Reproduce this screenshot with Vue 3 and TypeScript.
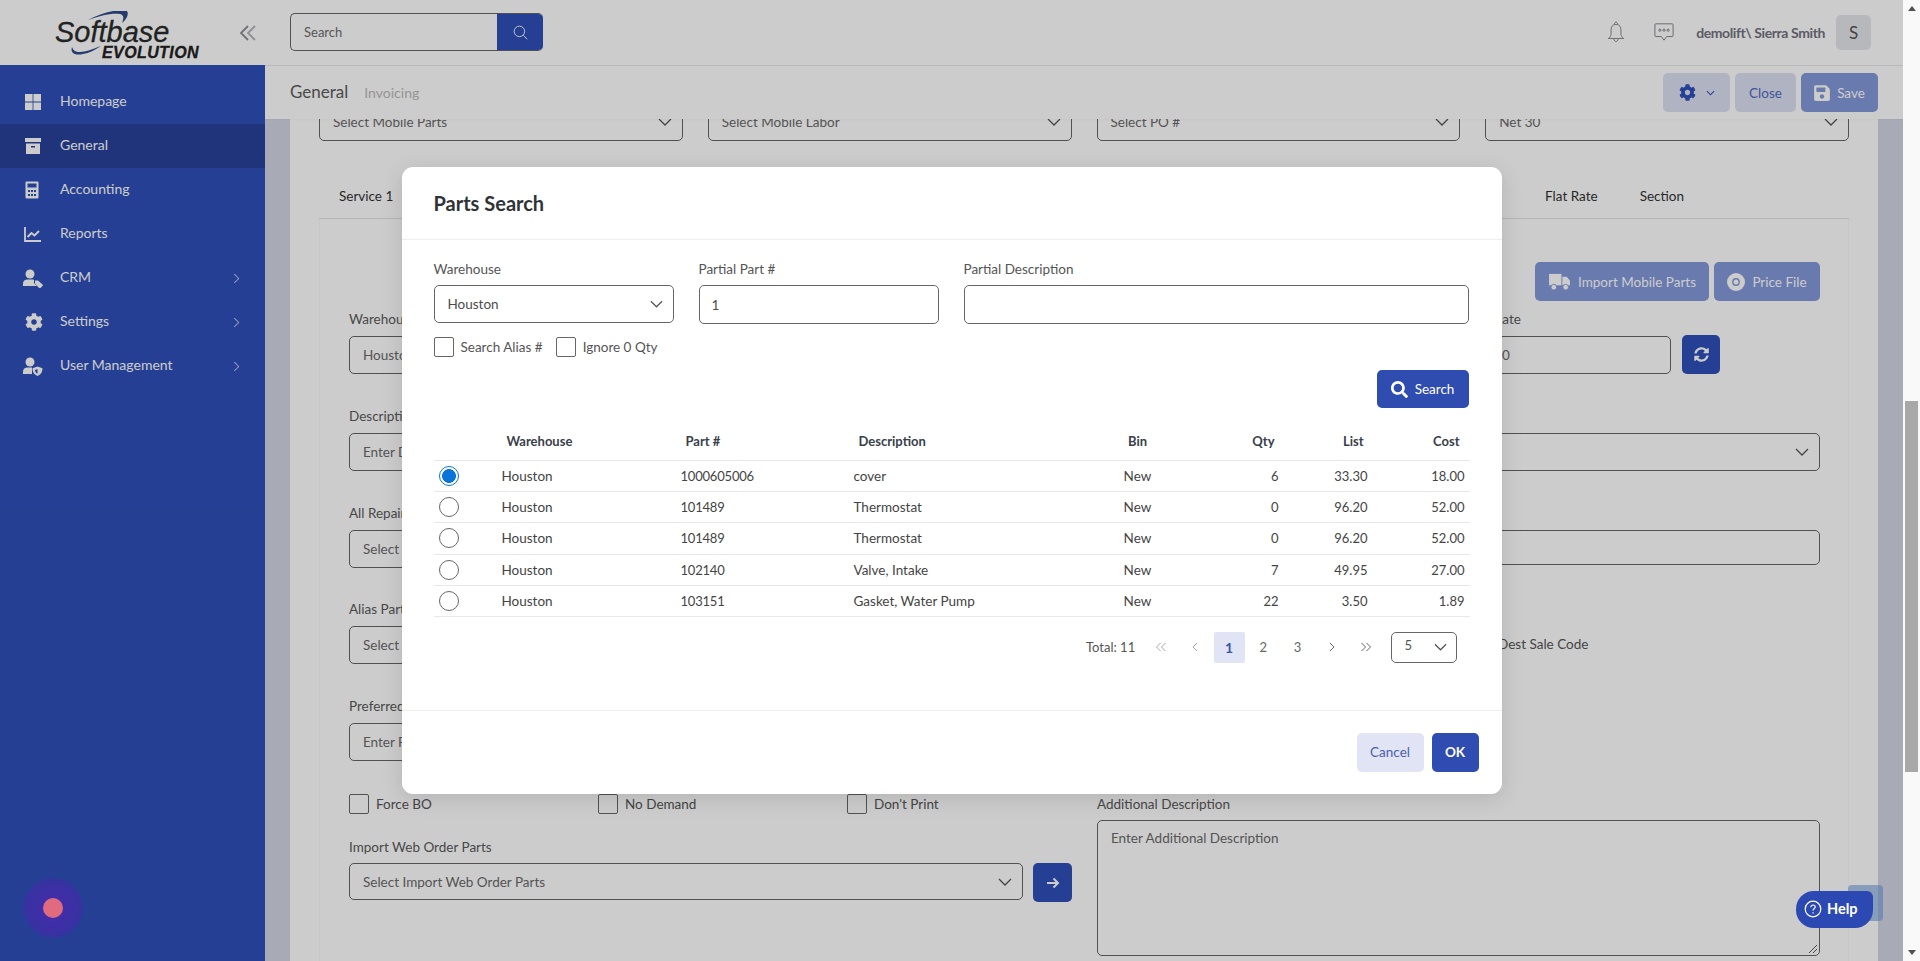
<script setup lang="ts">
interface NavItem {
  label: string
  icon: string
  active?: boolean
  more?: boolean
}

interface PartRow {
  warehouse: string
  part: string
  description: string
  bin: string
  qty: number
  list: string
  cost: string
}

const navItems: NavItem[] = [
  { label: 'Homepage', icon: 'home' },
  { label: 'General', icon: 'archive', active: true },
  { label: 'Accounting', icon: 'calc' },
  { label: 'Reports', icon: 'chart' },
  { label: 'CRM', icon: 'usertag', more: true },
  { label: 'Settings', icon: 'cog', more: true },
  { label: 'User Management', icon: 'usershield', more: true }
]

const topSelects = ['Select Mobile Parts', 'Select Mobile Labor', 'Select PO #', 'Net 30']

const parts: PartRow[] = [
  { warehouse: 'Houston', part: '1000605006', description: 'cover', bin: 'New', qty: 6, list: '33.30', cost: '18.00' },
  { warehouse: 'Houston', part: '101489', description: 'Thermostat', bin: 'New', qty: 0, list: '96.20', cost: '52.00' },
  { warehouse: 'Houston', part: '101489', description: 'Thermostat', bin: 'New', qty: 0, list: '96.20', cost: '52.00' },
  { warehouse: 'Houston', part: '102140', description: 'Valve, Intake', bin: 'New', qty: 7, list: '49.95', cost: '27.00' },
  { warehouse: 'Houston', part: '103151', description: 'Gasket, Water Pump', bin: 'New', qty: 22, list: '3.50', cost: '1.89' }
]

const cogPath =
  'M487.4 315.7l-42.6-24.6c4.3-23.2 4.3-47 0-70.2l42.6-24.6c4.9-2.8 7.1-8.6 5.5-14-11.1-35.6-30-67.8-54.7-94.6-3.8-4.1-10-5.1-14.8-2.3L380.8 110c-17.9-15.4-38.5-27.3-60.8-35.1V25.8c0-5.6-3.9-10.5-9.4-11.7-36.7-8.2-74.3-7.8-109.2 0-5.5 1.2-9.4 6.1-9.4 11.7V75c-22.2 7.9-42.8 19.8-60.8 35.1L88.7 85.5c-4.9-2.8-11-1.9-14.8 2.3-24.7 26.7-43.6 58.9-54.7 94.6-1.7 5.4.6 11.2 5.5 14L67.3 221c-4.3 23.2-4.3 47 0 70.2l-42.6 24.6c-4.9 2.8-7.1 8.6-5.5 14 11.1 35.6 30 67.8 54.7 94.6 3.8 4.1 10 5.1 14.8 2.3l42.6-24.6c17.9 15.4 38.5 27.3 60.8 35.1v49.2c0 5.6 3.9 10.5 9.4 11.7 36.7 8.2 74.3 7.8 109.2 0 5.5-1.2 9.4-6.1 9.4-11.7v-49.2c22.2-7.9 42.8-19.8 60.8-35.1l42.6 24.6c4.9 2.8 11 1.9 14.8-2.3 24.7-26.7 43.6-58.9 54.7-94.6 1.5-5.5-.7-11.3-5.6-14.1zM256 336c-44.1 0-80-35.9-80-80s35.9-80 80-80 80 35.9 80 80-35.9 80-80 80z'
const searchPath =
  'M505 442.7L405.3 343c-4.5-4.5-10.6-7-17-7H372c27.6-35.3 44-79.7 44-128C416 93.1 322.9 0 208 0S0 93.1 0 208s93.1 208 208 208c48.3 0 92.7-16.4 128-44v16.3c0 6.4 2.5 12.5 7 17l99.7 99.7c9.4 9.4 24.6 9.4 33.9 0l28.3-28.3c9.4-9.4 9.4-24.6.1-34zM208 336c-70.7 0-128-57.2-128-128 0-70.7 57.2-128 128-128 70.7 0 128 57.2 128 128 0 70.7-57.2 128-128 128z'
const savePath =
  'M433.941 129.941l-83.882-83.882A48 48 0 0 0 316.118 32H48C21.49 32 0 53.49 0 80v352c0 26.51 21.49 48 48 48h352c26.51 0 48-21.49 48-48V163.882a48 48 0 0 0-14.059-33.941zM224 416c-35.346 0-64-28.654-64-64 0-35.346 28.654-64 64-64s64 28.654 64 64c0 35.346-28.654 64-64 64zm96-304.52V212c0 6.627-5.373 12-12 12H76c-6.627 0-12-5.373-12-12V108c0-6.627 5.373-12 12-12h228.52c3.183 0 6.235 1.264 8.485 3.515l3.48 3.48A11.996 11.996 0 0 1 320 111.48z'
</script>

<template>
  <div class="page">
    <div class="app">
      <aside class="sidebar">
        <div class="brand">
          <div class="logo">
            <svg class="swoosh" viewBox="0 0 145 50" width="145" height="50">
              <path d="M33 9 C48 1 62 -2 72 0 C74 3 72 8 67 12 C69 7 69 4 65 3 C55 2 45 5 33 9Z" fill="#2f4a8a" />
              <path d="M17 36 C15 42 20 45 28 43 C34 42 40 39 46 35 C38 38 30 41 25 41 C20 41 18 39 17 36Z" fill="#2f4a8a" />
            </svg>
            <span class="logo-main">Softbase</span>
            <span class="logo-sub">EVOLUTION</span>
          </div>
          <svg class="collapse" viewBox="0 0 18 16" width="18" height="16" fill="none" stroke-width="1.8">
            <path d="M9 1 L2 8 L9 15" stroke="#8e8e96" />
            <path d="M16 1 L9 8 L16 15" stroke="#b4b4ba" />
          </svg>
        </div>
        <nav class="nav">
          <a v-for="item in navItems" :key="item.label" class="nav-item" :class="{ active: item.active }">
            <span class="nav-icon">
              <svg v-if="item.icon === 'home'" viewBox="0 0 20 20" width="20" height="20" fill="currentColor">
                <rect x="2" y="2" width="7.6" height="7.5" />
                <rect x="10.4" y="2" width="7.6" height="7.5" />
                <rect x="2" y="10.5" width="7.6" height="7.5" />
                <rect x="10.4" y="10.5" width="7.6" height="7.5" />
              </svg>
              <svg v-else-if="item.icon === 'archive'" viewBox="0 0 20 20" width="20" height="20" fill="currentColor">
                <rect x="2" y="2" width="16" height="4" />
                <path d="M3 7.5h14V18H3z M8 10v1.5h4V10z" fill-rule="evenodd" />
              </svg>
              <svg v-else-if="item.icon === 'calc'" viewBox="0 0 20 20" width="20" height="20" fill="currentColor">
                <path fill-rule="evenodd" d="M3.5 1.5h11a1 1 0 0 1 1 1v15a1 1 0 0 1-1 1h-11a1 1 0 0 1-1-1v-15a1 1 0 0 1 1-1z M4.5 3.5v4h9v-4z M5 10v2h2v-2z M8 10v2h2v-2z M11 10v2h2v-2z M5 14v2h2v-2z M8 14v2h2v-2z M11 14v2h2v-2z" />
              </svg>
              <svg v-else-if="item.icon === 'chart'" viewBox="0 0 20 20" width="20" height="20" fill="none" stroke="currentColor">
                <path d="M2 3v14h16" stroke-width="1.8" />
                <path d="M4.5 13l4-4 3 2.5L16 7" stroke-width="2" />
              </svg>
              <svg v-else-if="item.icon === 'usertag'" viewBox="0 0 21 20" width="21" height="20" fill="currentColor">
                <circle cx="7" cy="6" r="4.5" />
                <path d="M0 18v-2.5C0 13 2 11.5 4.5 11.5h5c1 0 1.5.3 1.5 1V15l3 3z" />
                <path d="M12 12.5h3l4.5 4a1 1 0 0 1 0 1.4l-2 2a1 1 0 0 1-1.4 0L12 15.5z" />
              </svg>
              <svg v-else-if="item.icon === 'cog'" class="cog-icon" viewBox="0 0 512 512" width="18" height="18" fill="currentColor">
                <path :d="cogPath" />
              </svg>
              <svg v-else viewBox="0 0 21 20" width="21" height="20" fill="currentColor">
                <circle cx="7" cy="6" r="4.5" />
                <path d="M0 18v-2.5C0 13 2 11.5 4.5 11.5h4.5V18z" />
                <path fill-rule="evenodd" d="M14.5 10.5l5 1.8c0 4-1.7 6.5-5 7.7-3.3-1.2-5-3.7-5-7.7z M14.5 13l-2.5 1c.2 1.9.9 3 2.5 3.7z" />
              </svg>
            </span>
            <span class="nav-label">{{ item.label }}</span>
            <svg v-if="item.more" class="nav-more" viewBox="0 0 8 12" width="7" height="11" fill="none" stroke="currentColor" stroke-width="1.2">
              <path d="M1.5 1 L6.5 6 L1.5 11" />
            </svg>
          </a>
        </nav>
      </aside>

      <div class="main">
        <header class="topbar">
          <div class="search">
            <span class="search-text">Search</span>
            <span class="search-btn">
              <svg viewBox="0 0 16 16" width="15" height="15" fill="none" stroke="#fff" stroke-width="1">
                <circle cx="6.8" cy="6.8" r="5.6" />
                <path d="M11 11l4.2 4.2" />
              </svg>
            </span>
          </div>
          <div class="user">
            <svg class="bell" viewBox="0 0 20 24" width="18" height="22" fill="none" stroke="#7c7c82" stroke-width="1">
              <path d="M10 3.5c-3.6 0-5.5 2.6-5.5 6v5c0 2-1.6 3.6-3 4.7h17c-1.4-1.1-3-2.7-3-4.7v-5c0-3.4-1.9-6-5.5-6z" />
              <path d="M8.3 3.5C8.3 2 9 1 10 1s1.7 1 1.7 2.5" />
              <path d="M7.5 19.5c.3 1.7 1.2 3 2.5 3s2.2-1.3 2.5-3" />
            </svg>
            <svg class="chat" viewBox="0 0 22 22" width="20" height="20" fill="none" stroke="#7c7c82" stroke-width="1">
              <path d="M2 2h18a1 1 0 0 1 1 1v12a1 1 0 0 1-1 1h-6l-3 4-3-4H2a1 1 0 0 1-1-1V3a1 1 0 0 1 1-1z" />
              <circle cx="6.5" cy="9" r="1.2" />
              <circle cx="11" cy="9" r="1.2" />
              <circle cx="15.5" cy="9" r="1.2" />
            </svg>
            <span class="user-name">demolift\ Sierra Smith</span>
            <span class="avatar">S</span>
          </div>
        </header>

        <div class="subbar">
          <div class="crumbs">
            <span class="crumb-main">General</span>
            <span class="crumb-sub">Invoicing</span>
          </div>
          <div class="subbar-actions">
            <button class="btn btn-soft btn-gear">
              <svg viewBox="0 0 512 512" width="17" height="17" fill="#2e4fb8"><path :d="cogPath" /></svg>
              <svg viewBox="0 0 10 6" width="9" height="6" fill="none" stroke="#2e4fb8" stroke-width="1.2"><path d="M1 1l4 4 4-4" /></svg>
            </button>
            <button class="btn btn-soft btn-close">Close</button>
            <button class="btn btn-faded btn-save">
              <svg viewBox="0 0 448 512" width="16" height="18" fill="#fff"><path :d="savePath" /></svg>
              Save
            </button>
          </div>
        </div>

        <div class="content">
          <section class="card">
            <div class="top-selects">
              <div v-for="label in topSelects" :key="label" class="box select">
                <span>{{ label }}</span>
                <svg viewBox="0 0 14 8" width="14" height="8" fill="none" stroke="#555" stroke-width="1.3"><path d="M1 1l6 6 6-6" /></svg>
              </div>
            </div>

            <div class="tabs">
              <span class="tab">Service 1</span>
              <span class="tab tab-far">Flat Rate</span>
              <span class="tab">Section</span>
            </div>

            <div class="panel">
              <div class="panel-actions">
                <button class="btn btn-faded">
                  <svg viewBox="0 0 24 20" width="23" height="19" fill="#fff">
                    <path d="M1 2h13v12H1z" />
                    <path d="M15 5h4.5l3.5 4v5h-8z" />
                    <circle cx="6" cy="16" r="3" stroke="#8499db" />
                    <circle cx="18.5" cy="16" r="3" stroke="#8499db" />
                  </svg>
                  Import Mobile Parts
                </button>
                <button class="btn btn-faded">
                  <svg viewBox="0 0 18 18" width="18" height="18">
                    <circle cx="9" cy="9" r="9" fill="#fff" />
                    <circle cx="9" cy="9" r="3.2" fill="none" stroke="#8499db" stroke-width="1.4" />
                  </svg>
                  Price File
                </button>
              </div>

              <div class="form-grid">
                <div class="field">
                  <label>Warehouse</label>
                  <div class="box"><span>Houston</span></div>
                </div>
                <div class="field-rate">
                  <div class="field">
                    <label>Labor Rate</label>
                    <div class="box"><span>100.00</span></div>
                  </div>
                  <button class="btn btn-solid btn-square">
                    <svg viewBox="0 0 512 512" width="15" height="15" fill="#fff">
                      <path d="M370.7 133.3C339.5 104 298.9 88 255.8 88c-77.5.1-144.3 53.2-162.8 126.9-1.3 5.4-6.1 9.2-11.7 9.2H24.1c-7.5 0-13.2-6.8-11.8-14.2C33.9 94.9 134.8 8 256 8c66.4 0 126.8 26.1 171.3 68.7L463 41c15.1-15.1 41-4.4 41 17v134c0 13.3-10.7 24-24 24H346c-21.4 0-32.1-25.9-17-41l41.7-41.7zM32 296h134c21.4 0 32.1 25.9 17 41l-41.7 41.7c31.2 29.3 71.8 45.3 114.9 45.3 77.4-.1 144.3-53.1 162.8-126.8 1.3-5.4 6.1-9.2 11.7-9.2h57.3c7.5 0 13.2 6.8 11.8 14.2C478.1 417.1 377.2 504 256 504c-66.4 0-126.8-26.1-171.3-68.7L49 471c-15.1 15.1-41 4.4-41-17V320c0-13.3 10.7-24 24-24z" />
                    </svg>
                  </button>
                </div>

                <div class="field">
                  <label>Description</label>
                  <div class="box"><span>Enter Description</span></div>
                </div>
                <div class="field">
                  <label>Category</label>
                  <div class="box select">
                    <span>Select Category</span>
                    <svg viewBox="0 0 14 8" width="14" height="8" fill="none" stroke="#555" stroke-width="1.3"><path d="M1 1l6 6 6-6" /></svg>
                  </div>
                </div>

                <div class="field">
                  <label>All Repair Parts</label>
                  <div class="box"><span>Select Repair Parts</span></div>
                </div>
                <div class="field">
                  <label>Comments</label>
                  <div class="box short"><span>Enter Comments</span></div>
                </div>

                <div class="field">
                  <label>Alias Parts</label>
                  <div class="box"><span>Select Alias Parts</span></div>
                </div>
                <div class="dest-check">
                  <span class="check"></span>
                  <span>Dest Sale Code</span>
                </div>

                <div class="field">
                  <label>Preferred Vendor</label>
                  <div class="box"><span>Enter Preferred Vendor</span></div>
                </div>
              </div>

              <div class="form-bottom">
                <div>
                  <div class="checks">
                    <div class="check-item"><span class="check"></span><span>Force BO</span></div>
                    <div class="check-item"><span class="check"></span><span>No Demand</span></div>
                    <div class="check-item"><span class="check"></span><span>Don't Print</span></div>
                  </div>
                  <div class="field web-order">
                    <label>Import Web Order Parts</label>
                    <div class="web-row">
                      <div class="box select web-select">
                        <span>Select Import Web Order Parts</span>
                        <svg viewBox="0 0 14 8" width="14" height="8" fill="none" stroke="#555" stroke-width="1.3"><path d="M1 1l6 6 6-6" /></svg>
                      </div>
                      <button class="btn btn-solid btn-square">
                        <svg viewBox="0 0 14 14" width="14" height="14" fill="none" stroke="#fff" stroke-width="2"><path d="M1 7h11M7.5 2.5L12 7l-4.5 4.5" /></svg>
                      </button>
                    </div>
                  </div>
                </div>
                <div class="field field-area">
                  <label>Additional Description</label>
                  <div class="box area">
                    <span>Enter Additional Description</span>
                    <svg class="grip" viewBox="0 0 10 10" width="10" height="10" stroke="#555" stroke-width="1"><path d="M1 9l8-8M5 9l4-4" /></svg>
                  </div>
                </div>
              </div>
            </div>
          </section>
        </div>
      </div>

      <span class="to-top"></span>

      <div class="backdrop">
        <div class="modal">
          <div class="modal-head">Parts Search</div>
          <div class="modal-body">
            <div class="search-fields">
              <div class="mfield">
                <label>Warehouse</label>
                <div class="mbox">
                  <span>Houston</span>
                  <svg viewBox="0 0 14 8" width="13" height="8" fill="none" stroke="#555" stroke-width="1.3"><path d="M1 1l6 6 6-6" /></svg>
                </div>
              </div>
              <div class="mfield">
                <label>Partial Part #</label>
                <div class="mbox input"><span>1</span></div>
              </div>
              <div class="mfield">
                <label>Partial Description</label>
                <div class="mbox input"></div>
              </div>
            </div>
            <div class="search-checks">
              <div class="check-item"><span class="check"></span><span>Search Alias #</span></div>
              <div class="check-item"><span class="check"></span><span>Ignore 0 Qty</span></div>
            </div>
            <div class="search-action">
              <button class="btn btn-primary">
                <svg viewBox="0 0 512 512" width="17" height="17" fill="#fff"><path :d="searchPath" /></svg>
                Search
              </button>
            </div>

            <table class="parts">
              <colgroup>
                <col style="width: 63px" />
                <col style="width: 179px" />
                <col style="width: 173px" />
                <col style="width: 242px" />
                <col style="width: 94px" />
                <col style="width: 99px" />
                <col style="width: 89px" />
                <col style="width: 97px" />
              </colgroup>
              <thead>
                <tr>
                  <th></th>
                  <th>Warehouse</th>
                  <th>Part #</th>
                  <th>Description</th>
                  <th class="center">Bin</th>
                  <th class="right">Qty</th>
                  <th class="right">List</th>
                  <th class="right last">Cost</th>
                </tr>
              </thead>
              <tbody>
                <tr v-for="(row, i) in parts" :key="i">
                  <td class="radio-cell"><span class="radio" :class="{ on: i === 0 }"></span></td>
                  <td>{{ row.warehouse }}</td>
                  <td class="part-no">{{ row.part }}</td>
                  <td>{{ row.description }}</td>
                  <td class="center">{{ row.bin }}</td>
                  <td class="right">{{ row.qty }}</td>
                  <td class="right">{{ row.list }}</td>
                  <td class="right">{{ row.cost }}</td>
                </tr>
              </tbody>
            </table>

            <div class="pager">
              <span class="total">Total: 11</span>
              <span class="page-item muted">
                <svg viewBox="0 0 12 10" width="12" height="10" fill="none" stroke="currentColor"><path d="M5.5 1l-4 4 4 4M10.5 1l-4 4 4 4" /></svg>
              </span>
              <span class="page-item muted">
                <svg viewBox="0 0 6 10" width="6" height="10" fill="none" stroke="currentColor"><path d="M5 1L1 5l4 4" /></svg>
              </span>
              <span class="page-item current">1</span>
              <span class="page-item">2</span>
              <span class="page-item">3</span>
              <span class="page-item">
                <svg viewBox="0 0 6 10" width="6" height="10" fill="none" stroke="currentColor"><path d="M1 1l4 4-4 4" /></svg>
              </span>
              <span class="page-item">
                <svg viewBox="0 0 12 10" width="12" height="10" fill="none" stroke="currentColor"><path d="M1.5 1l4 4-4 4M6.5 1l4 4-4 4" /></svg>
              </span>
              <div class="page-size">
                <span>5</span>
                <svg viewBox="0 0 14 8" width="13" height="8" fill="none" stroke="#555" stroke-width="1.3"><path d="M1 1l6 6 6-6" /></svg>
              </div>
            </div>
          </div>
          <div class="modal-foot">
            <button class="btn btn-cancel">Cancel</button>
            <button class="btn btn-primary btn-ok">OK</button>
          </div>
        </div>
      </div>

      <span class="chat-dot"><i></i></span>
      <button class="help">
        <svg viewBox="0 0 18 18" width="18" height="18" fill="none" stroke="#fff" stroke-width="1.2">
          <circle cx="9" cy="9" r="7.8" />
          <path d="M6.8 7.2c0-1.4 1-2.2 2.2-2.2s2.2.8 2.2 2c0 1.7-2.2 1.7-2.2 3.4" />
          <path d="M9 12.2v1.2" />
        </svg>
        Help
      </button>
    </div>

    <div class="scrollbar">
      <span class="arrow up"></span>
      <span class="thumb"></span>
      <span class="arrow down"></span>
    </div>
  </div>
</template>

<style>
html,
body {
  margin: 0;
  overflow: hidden;
}
</style>

<style scoped>
.page {
  display: flex;
  width: 1920px;
  height: 961px;
  overflow: hidden;
  font-family: Lato, "Noto Sans", sans-serif;
  font-size: 13.5px;
  color: #555;
}

.app {
  position: relative;
  flex: 1;
  display: flex;
  min-width: 0;
  overflow: hidden;
  background: #d3d6e4;
}

.sidebar {
  width: 265px;
  flex: none;
  background: #2e4fb8;
  display: flex;
  flex-direction: column;
}

.brand {
  height: 65px;
  flex: none;
  background: #fff;
  display: flex;
  align-items: flex-start;
  padding-left: 55px;
  box-sizing: border-box;
  position: relative;
}

.logo {
  position: relative;
  width: 146px;
  padding-top: 17px;
  display: flex;
  flex-direction: column;
}

.swoosh {
  position: absolute;
  left: 0;
  top: 11px;
}

.logo-main {
  font-family: "Liberation Sans", sans-serif;
  font-style: italic;
  font-size: 29px;
  line-height: 30px;
  color: #2b2b2b;
  -webkit-text-stroke: 0.3px #2b2b2b;
}

.logo-sub {
  font-family: "Liberation Sans", sans-serif;
  font-style: italic;
  font-weight: 700;
  font-size: 16px;
  line-height: 13px;
  letter-spacing: 0.4px;
  color: #222;
  -webkit-text-stroke: 0.3px #222;
  margin-left: 47px;
  margin-top: -1px;
}

.collapse {
  position: absolute;
  left: 239px;
  top: 25px;
}

.nav {
  padding-top: 15px;
  display: flex;
  flex-direction: column;
}

.nav-item {
  height: 44px;
  display: flex;
  align-items: center;
  padding: 0 25px 0 23px;
  color: #fff;
  font-size: 14px;
}

.nav-item.active {
  background: #28429b;
}

.nav-icon {
  width: 37px;
  flex: none;
  display: flex;
  align-items: center;
}

.cog-icon {
  margin-left: 2px;
}

.nav-label {
  flex: 1;
  padding-bottom: 3px;
}

.nav-more {
  color: #b9c4e8;
}

.main {
  flex: 1;
  min-width: 0;
  display: flex;
  flex-direction: column;
}

.topbar {
  height: 66px;
  flex: none;
  box-sizing: border-box;
  background: #fff;
  border-bottom: 1px solid #e9e9e9;
  display: flex;
  align-items: center;
  justify-content: space-between;
  padding: 0 32px 1px 25px;
}

.search {
  width: 253px;
  height: 38px;
  display: flex;
  box-sizing: border-box;
  border: 1px solid #666;
  border-right: none;
  border-radius: 5px;
  overflow: hidden;
}

.search-text {
  flex: 1;
  padding-left: 13px;
  line-height: 36px;
  font-size: 13px;
  color: #6c6c6c;
}

.search-btn {
  width: 46px;
  margin: -1px 0;
  background: #2e4fb8;
  display: flex;
  align-items: center;
  justify-content: center;
}

.user {
  display: flex;
  align-items: center;
}

.chat {
  margin-left: 29px;
}

.user-name {
  margin-left: 22px;
  font-weight: 700;
  font-size: 14px;
  color: #737380;
  letter-spacing: -0.4px;
}

.avatar {
  margin-left: 11px;
  width: 35px;
  height: 35px;
  border-radius: 5px;
  background: #e4e7ec;
  display: flex;
  align-items: center;
  justify-content: center;
  font-size: 17px;
  color: #555;
}

.subbar {
  height: 53px;
  flex: none;
  background: #fff;
  display: flex;
  align-items: center;
  justify-content: space-between;
  padding-left: 25px;
  position: relative;
  z-index: 2;
  box-shadow: 0 1px 2px rgba(0, 0, 0, 0.03);
}

.crumbs {
  display: flex;
  align-items: baseline;
  gap: 16px;
  padding-bottom: 2px;
}

.crumb-main {
  font-size: 17px;
  color: #5c5c5c;
}

.crumb-sub {
  font-size: 14px;
  color: #bbb;
}

.subbar-actions {
  display: flex;
  margin-right: 25px;
  gap: 5px;
}

.btn {
  border: none;
  height: 39px;
  border-radius: 5px;
  display: inline-flex;
  align-items: center;
  justify-content: center;
  gap: 7px;
  font-family: inherit;
  font-size: 13.5px;
  cursor: pointer;
  padding: 0;
}

.btn-soft {
  background: #dde2f3;
  color: #4e69c0;
}

.btn-gear {
  width: 67px;
  gap: 10px;
}

.btn-close {
  width: 61px;
}

.btn-save {
  width: 77px;
  gap: 7px;
}

.btn-faded {
  background: #8499db;
  color: #fff;
}

.btn-solid {
  background: #2e4fb8;
  color: #fff;
}

.btn-square {
  width: 38px;
}

.content {
  flex: 1;
  min-height: 0;
  overflow: hidden;
  padding: 0 25px;
}

.card {
  background: #fff;
  padding: 0 29px 40px;
  margin-top: -16px;
}

.box {
  height: 38px;
  box-sizing: border-box;
  border: 1px solid #666;
  border-radius: 5px;
  display: flex;
  align-items: center;
  padding: 0 13px;
  color: #6a6a6a;
  font-size: 13.5px;
  background: #fff;
}

.box.select {
  justify-content: space-between;
  padding-right: 10px;
}

.box.short {
  height: 35px;
}

.top-selects {
  display: grid;
  grid-template-columns: repeat(4, 1fr);
  column-gap: 25px;
}

.tabs {
  display: flex;
  height: 78px;
  box-sizing: border-box;
  padding: 45px 165px 0 20px;
  border-bottom: 1px solid #e3e3e3;
}

.tab {
  color: #333;
  font-size: 13.5px;
  line-height: 20px;
  margin-right: 42px;
}

.tab:last-child {
  margin-right: 0;
}

.tab-far {
  margin-left: auto;
}

.panel {
  padding: 43px 28px 40px 29px;
  border: 1px solid #fbfbfb;
  border-top: none;
}

.panel-actions {
  display: flex;
  justify-content: flex-end;
  gap: 5px;
}

.panel-actions .btn:first-child {
  width: 174px;
}

.panel-actions .btn:last-child {
  width: 106px;
}

.form-grid {
  margin-top: 8px;
  display: grid;
  grid-template-columns: 723px 723px;
  column-gap: 25px;
  row-gap: 31.75px;
  align-items: start;
}

.field label {
  display: block;
  height: 20px;
  line-height: 20px;
  margin-bottom: 7px;
  color: #5a5a5a;
}

.field-rate {
  display: flex;
  justify-content: flex-end;
  align-items: flex-end;
  gap: 11px;
  padding-right: 100px;
}

.field-rate .field {
  width: 217px;
}

.field-rate label {
  padding-left: 3px;
}

.field-rate .box {
  padding-left: 12.5px;
}

.dest-check {
  display: flex;
  align-items: center;
  gap: 6px;
  justify-content: flex-start;
  padding: 35px 0 0 375px;
}

.check {
  width: 20px;
  height: 20px;
  box-sizing: border-box;
  border: 1px solid #666;
  border-radius: 2px;
  flex: none;
  background: #fff;
}

.form-bottom {
  margin-top: 33px;
  display: grid;
  grid-template-columns: 723px 723px;
  column-gap: 25px;
  align-items: start;
}

.checks {
  display: grid;
  grid-template-columns: repeat(3, 249px);
}

.check-item {
  display: flex;
  align-items: center;
  gap: 7px;
}

.web-order {
  margin-top: 23px;
}

.web-order label {
  margin-bottom: 6px;
}

.web-row {
  display: flex;
  gap: 10px;
}

.web-select {
  width: 674px;
  height: 37px;
}

.web-select + .btn-square {
  width: 39px;
}

.field-area label {
  margin-bottom: 6px;
}

.box.area {
  height: 136px;
  position: relative;
  align-items: flex-start;
  padding-top: 9px;
}

.grip {
  position: absolute;
  right: 1px;
  bottom: 1px;
}

.to-top {
  position: absolute;
  left: 1848px;
  top: 885px;
  width: 35px;
  height: 36px;
  border-radius: 4px;
  background: rgba(100, 150, 215, 0.55);
}

.backdrop {
  position: absolute;
  inset: 0;
  background: rgba(0, 0, 0, 0.2);
  z-index: 5;
  padding-top: 167px;
  display: flex;
  justify-content: center;
  align-items: flex-start;
}

.modal {
  width: 1100px;
  background: #fff;
  border-radius: 11px;
  box-shadow: 0 4px 22px rgba(0, 0, 0, 0.12);
  color: #444;
}

.modal-head {
  height: 73px;
  box-sizing: border-box;
  padding: 0 32px;
  display: flex;
  align-items: center;
  border-bottom: 1px solid #eee;
  font-size: 20px;
  font-weight: 700;
  color: #2f3338;
}

.modal-body {
  padding: 19px 33px 47px 32px;
}

.search-fields {
  display: grid;
  grid-template-columns: 240px 240px 505px;
  column-gap: 25px;
}

.mfield label {
  display: block;
  height: 20px;
  line-height: 20px;
  margin-bottom: 6px;
  color: #555;
}

.mbox {
  height: 38px;
  box-sizing: border-box;
  border: 1px solid #666;
  border-radius: 5px;
  display: flex;
  align-items: center;
  justify-content: space-between;
  padding: 0 10px 0 13px;
  font-size: 13.5px;
  color: #4c4c4c;
}

.mbox.input {
  height: 39px;
  padding-left: 12px;
}

.search-checks {
  display: flex;
  gap: 13px;
  margin-top: 13px;
  font-size: 13.5px;
  color: #555;
}

.search-action {
  display: flex;
  justify-content: flex-end;
  margin-top: 13px;
}

.btn-primary {
  background: #2f4cb0;
  color: #fff;
  width: 92px;
  height: 38px;
}

.parts {
  width: 1036px;
  margin-top: 14px;
  border-collapse: collapse;
  table-layout: fixed;
  font-size: 13.5px;
}

.parts th {
  height: 38px;
  padding: 0 0 0 10px;
  text-align: left;
  font-size: 13px;
  font-weight: 700;
  color: #39404a;
  border-bottom: 1px solid #e8e8e8;
}

.parts td {
  height: 30.2px;
  padding: 0 0 0 5px;
  color: #444;
  border-bottom: 1px solid #e8e8e8;
}

.parts td.part-no {
  font-size: 13px;
  letter-spacing: -0.2px;
}

.parts th.center,
.parts td.center {
  text-align: center;
  padding: 0;
}

.parts th.right {
  text-align: right;
  padding: 0 9px 0 0;
}

.parts th.right.last {
  padding-right: 10px;
}

.parts td.right {
  text-align: right;
  padding: 0 5px 0 0;
  font-size: 13px;
}

.parts td.radio-cell {
  padding: 0 0 0 5px;
}

.radio {
  display: block;
  width: 20px;
  height: 20px;
  box-sizing: border-box;
  border: 1px solid #666;
  border-radius: 50%;
}

.radio.on {
  border: 1.5px solid #0a74da;
  background: radial-gradient(circle, #0a74da 0, #0a74da 6.6px, #fff 7.2px);
}

.pager {
  margin-top: 15px;
  display: flex;
  align-items: center;
  justify-content: flex-end;
  padding-right: 12px;
  font-size: 13px;
  color: #555;
}

.total {
  margin-right: 10px;
}

.page-item {
  width: 31px;
  height: 31px;
  margin-right: 3.2px;
  display: flex;
  align-items: center;
  justify-content: center;
  color: #666;
}

.page-item.muted {
  color: #a8a8a8;
}

.page-item.current {
  background: #e0e4f4;
  border-radius: 2px;
  color: #3a55ad;
  font-weight: 700;
  font-size: 14px;
}

.page-size {
  width: 66px;
  height: 31px;
  margin-left: 6px;
  box-sizing: border-box;
  border: 1px solid #666;
  border-radius: 5px;
  display: flex;
  align-items: center;
  justify-content: space-between;
  padding: 0 9px 5px 13px;
}

.page-size svg {
  margin-top: 5px;
}

.modal-foot {
  height: 84px;
  box-sizing: border-box;
  border-top: 1px solid #eee;
  padding: 22px 23px 0 0;
  display: flex;
  justify-content: flex-end;
  gap: 8px;
}

.btn-cancel {
  width: 67px;
  background: #e0e4f4;
  color: #4d60a8;
}

.btn-ok {
  width: 47px;
  height: 39px;
  font-weight: 700;
}

.chat-dot {
  position: absolute;
  left: 23px;
  top: 878px;
  width: 60px;
  height: 60px;
  border-radius: 50%;
  background: radial-gradient(circle, #442cab 0, #3b30a4 55%, rgba(48, 60, 155, 0) 100%);
  z-index: 6;
  display: flex;
  align-items: center;
  justify-content: center;
}

.chat-dot i {
  width: 20px;
  height: 20px;
  border-radius: 50%;
  background: #e06b7f;
}

.help {
  position: absolute;
  left: 1796px;
  top: 891px;
  width: 77px;
  height: 37px;
  border: none;
  border-radius: 18px 6px 18px 18px;
  background: #2c49b3;
  color: #fff;
  font-family: inherit;
  font-weight: 700;
  font-size: 14.5px;
  display: flex;
  align-items: center;
  gap: 5px;
  padding: 0 0 2px 8px;
  z-index: 6;
}

.scrollbar {
  width: 17px;
  flex: none;
  background: #f9f9f9;
  display: flex;
  flex-direction: column;
  align-items: center;
  position: relative;
}

.arrow {
  width: 0;
  height: 0;
  border-left: 4px solid transparent;
  border-right: 4px solid transparent;
}

.arrow.up {
  margin-top: 6px;
  border-bottom: 5px solid #505050;
}

.arrow.down {
  margin-top: auto;
  margin-bottom: 6px;
  border-top: 5px solid #505050;
}

.thumb {
  width: 13px;
  height: 371px;
  margin-top: 390px;
  background: #a8a8a8;
}
</style>
